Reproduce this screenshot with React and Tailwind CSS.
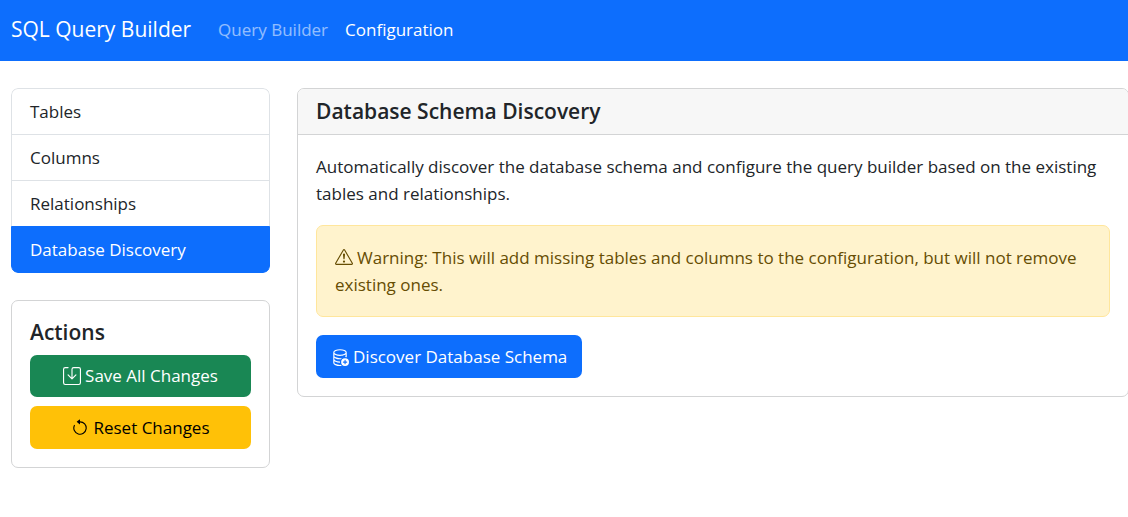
import {
  BsArrowCounterclockwise,
  BsDatabaseAdd,
  BsExclamationTriangle,
  BsSave,
} from "react-icons/bs";

const sections = [
  { label: "Tables", active: false },
  { label: "Columns", active: false },
  { label: "Relationships", active: false },
  { label: "Database Discovery", active: true },
];

function Navbar() {
  return (
    <nav className="flex items-center bg-[#0d6efd] px-[11px] pt-3 pb-[14px]">
      <a href="#" className="mr-[27px] text-[21px] leading-[35px] text-white">
        SQL Query Builder
      </a>
      <a href="#query" className="mr-[17px] text-[17px] leading-[27px] text-white/55">
        Query Builder
      </a>
      <a href="#config" className="text-[17px] leading-[27px] text-white">
        Configuration
      </a>
    </nav>
  );
}

function SectionList() {
  return (
    <div className="flex flex-col overflow-hidden rounded-[7px]">
      {sections.map(({ label, active }) => (
        <a
          key={label}
          href="#section"
          className={
            active
              ? "rounded-b-[7px] border border-[#0d6efd] bg-[#0d6efd] px-[18px] py-[9px] text-white"
              : "border border-b-0 border-[#dee2e6] px-[18px] py-[9px] first:rounded-t-[7px]"
          }
        >
          {label}
        </a>
      ))}
    </div>
  );
}

function Actions() {
  return (
    <section className="flex flex-col rounded-[7px] border border-[#d3d4d5] p-[18px]">
      <h2 className="mb-[9px] text-[21px] leading-[27px] font-semibold">Actions</h2>
      <button
        type="button"
        className="mb-[9px] flex items-center justify-center gap-1 rounded-[7px] bg-[#198754] py-2 leading-[26px] text-white"
      >
        <BsSave className="size-[18px]" />
        Save All Changes
      </button>
      <button
        type="button"
        className="flex items-center justify-center gap-1 rounded-[7px] bg-[#ffc107] py-2 text-black"
      >
        <BsArrowCounterclockwise className="size-[18px]" />
        Reset Changes
      </button>
    </section>
  );
}

function Discovery() {
  return (
    <section className="-mr-px rounded-[7px] border border-[#d3d4d5]">
      <h1 className="rounded-t-[6px] border-b border-[#d3d4d5] bg-[#f7f7f7] px-[18px] py-[9px] text-[21px] leading-[27px] font-semibold">
        Database Schema Discovery
      </h1>
      <div className="p-[18px]">
        <p className="mb-[18px]">
          Automatically discover the database schema and configure the query builder based on the
          existing tables and relationships.
        </p>
        <div
          role="alert"
          className="mb-[18px] rounded-[7px] border border-[#ffe69c] bg-[#fff3cd] p-[18px] text-[#664d03]"
        >
          <BsExclamationTriangle className="mr-1 inline size-[18px] align-[-2px]" />
          Warning: This will add missing tables and columns to the configuration, but will not
          remove existing ones.
        </div>
        <button
          type="button"
          className="flex items-center gap-1 rounded-[7px] bg-[#0d6efd] px-[15px] py-2 text-white"
        >
          <BsDatabaseAdd className="size-[18px]" />
          Discover Database Schema
        </button>
      </div>
    </section>
  );
}

export default function App() {
  return (
    <div className="overflow-x-hidden bg-white font-['Open_Sans',sans-serif] text-[17px] leading-[27px] text-[#212529]">
      <Navbar />
      <main className="grid grid-cols-12 items-start gap-[27px] py-[27px] pl-[11px]">
        <aside className="col-span-3 flex flex-col gap-[27px]">
          <SectionList />
          <Actions />
        </aside>
        <div className="col-span-9">
          <Discovery />
        </div>
      </main>
    </div>
  );
}
